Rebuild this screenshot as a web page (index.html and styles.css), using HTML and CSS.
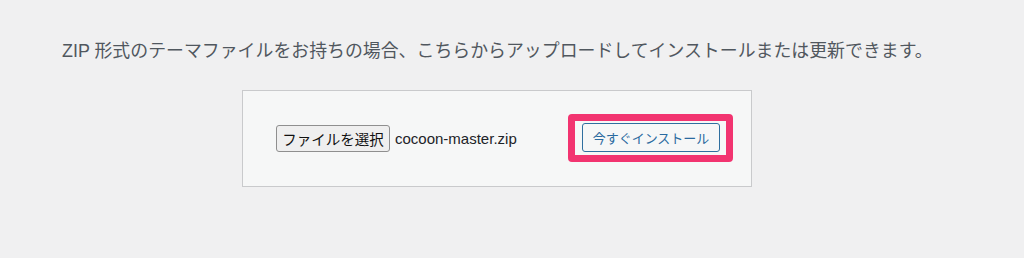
FILE: index.html
```html
<!DOCTYPE html>
<html lang="ja">
<head>
<meta charset="utf-8">
<link rel="stylesheet" href="styles.css">
</head>
<body>
<p class="intro">ZIP 形式のテーマファイルをお持ちの場合、こちらからアップロードしてインストールまたは更新できます。</p>
<div class="upload-box">
  <div class="file-field">
    <span class="file-btn">ファイルを選択</span>
    <span class="file-name">cocoon-master.zip</span>
  </div>
  <div class="highlight">
    <span class="install-btn">今すぐインストール</span>
  </div>
</div>
</body>
</html>
```
FILE: styles.css
```css
html, body {
  margin: 0;
  padding: 0;
  background: #f0f0f1;
}
body {
  width: 1024px;
  height: 258px;
  overflow: hidden;
  font-family: "Liberation Sans", "Noto Sans CJK JP", sans-serif;
}
.intro {
  margin: 0;
  padding: 38px 0 0 62px;
  font-size: 17.9px;
  line-height: 26px;
  color: #50575e;
  white-space: nowrap;
}
.upload-box {
  box-sizing: border-box;
  margin: 26px 0 0 242px;
  width: 510px;
  height: 97px;
  border: 1px solid #c9cacc;
  background: #f6f7f7;
  display: flex;
  align-items: center;
  padding-left: 33px;
}
.file-field {
  display: flex;
  align-items: center;
  width: 292px;
}
.file-btn {
  box-sizing: border-box;
  height: 27px;
  width: 114px;
  display: flex;
  align-items: center;
  justify-content: center;
  background: #efefef;
  border: 1px solid #8f8f8f;
  border-radius: 3px;
  font-size: 14.5px;
  color: #111;
}
.file-name {
  margin-left: 5px;
  font-size: 15px;
  color: #1d2327;
}
.highlight {
  display: flex;
  margin-top: -1px;
  padding: 2px 6px 3px 7px;
  border: 7px solid #f23470;
  border-radius: 4px;
  background: #f6f7f7;
}
.install-btn {
  box-sizing: border-box;
  width: 138px;
  height: 29px;
  display: flex;
  align-items: center;
  justify-content: center;
  border: 1px solid #2f6f9f;
  border-radius: 3px;
  background: #f6f7f7;
  color: #2a6aa0;
  font-size: 13px;
}
```
